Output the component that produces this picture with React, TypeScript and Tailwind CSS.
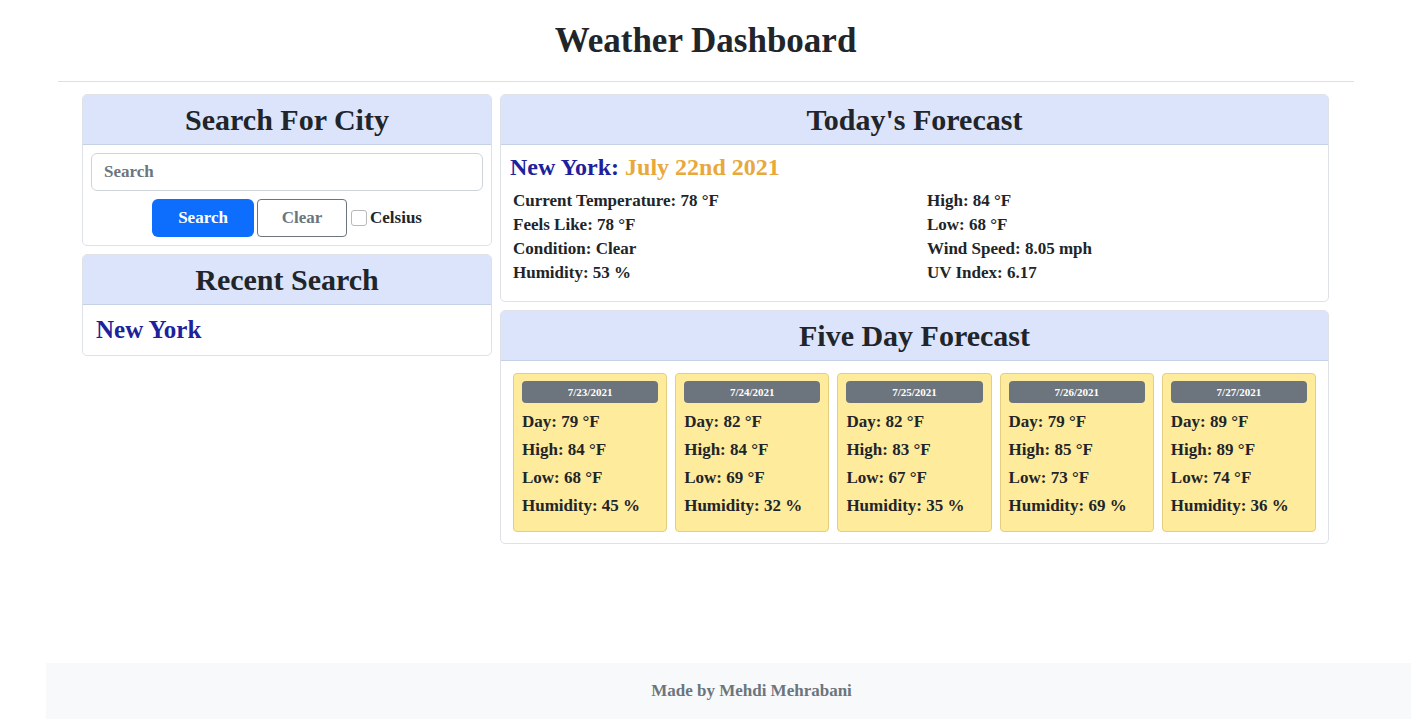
import React from 'react';

const today = {
  left: ['Current Temperature: 78 °F', 'Feels Like: 78 °F', 'Condition: Clear', 'Humidity: 53 %'],
  right: ['High: 84 °F', 'Low: 68 °F', 'Wind Speed: 8.05 mph', 'UV Index: 6.17'],
};

const forecast = [
  { date: '7/23/2021', day: 79, high: 84, low: 68, hum: 45 },
  { date: '7/24/2021', day: 82, high: 84, low: 69, hum: 32 },
  { date: '7/25/2021', day: 82, high: 83, low: 67, hum: 35 },
  { date: '7/26/2021', day: 79, high: 85, low: 73, hum: 69 },
  { date: '7/27/2021', day: 89, high: 89, low: 74, hum: 36 },
];

function Card({ title, children }: { title: string; children: React.ReactNode }) {
  return (
    <div className="border border-[#dee2e6] rounded-[5px] overflow-hidden bg-white">
      <div className="h-[50px] bg-[#dbe4fa] border-b border-[#c6d0e6] flex items-center justify-center">
        <h2 className="text-[30px] leading-none">{title}</h2>
      </div>
      {children}
    </div>
  );
}

export default function App() {
  return (
    <div className="min-h-screen flex flex-col bg-white text-[#212529] font-['Liberation_Serif',serif] font-bold">
      <header className="mx-auto w-[1296px] h-[82px] border-b border-[#dfdfdf] flex items-center justify-center">
        <h1 className="text-[35px] leading-none">Weather Dashboard</h1>
      </header>

      <main className="mx-auto w-[1247px] mt-3 grid grid-cols-[410px_1fr] gap-2 items-start">
        <div className="flex flex-col gap-2">
          <Card title="Search For City">
            <div className="p-2">
              <input
                placeholder="Search"
                className="w-full h-[38px] border border-[#ced4da] rounded-[6px] px-3 text-[17px] font-bold placeholder:text-[#6c757d] outline-none"
              />
              <div className="mt-2 flex items-center justify-center">
                <button className="w-[102px] h-[38px] bg-[#0d6efd] text-white rounded-[6px] text-[17px]">Search</button>
                <button className="ml-[3px] w-[90px] h-[38px] border border-[#6c757d] text-[#6c757d] rounded-[4px] text-[17px]">Clear</button>
                <label className="ml-1 flex items-center text-[17px]">
                  <span className="w-4 h-4 border border-[#b9b9b9] rounded-[3px] bg-white mr-[3px]" />
                  Celsius
                </label>
              </div>
            </div>
          </Card>
          <Card title="Recent Search">
            <div className="px-[13px] py-2 h-[50px] flex items-center">
              <span className="text-[25px] text-[#201f9c]">New York</span>
            </div>
          </Card>
        </div>

        <div className="flex flex-col gap-2">
          <Card title="Today's Forecast">
            <div className="pt-[6px] pb-4">
              <div className="px-[9px] h-8 leading-8 text-[24px]">
                <span className="text-[#201f9c]">New York: </span>
                <span className="text-[#e9a83a]">July 22nd 2021</span>
              </div>
              <div className="mt-[6px] pl-3 grid grid-cols-[414px_1fr] text-[17px]">
                <div>
                  {today.left.map((t) => (
                    <div key={t} className="h-6 leading-6">{t}</div>
                  ))}
                </div>
                <div>
                  {today.right.map((t) => (
                    <div key={t} className="h-6 leading-6">{t}</div>
                  ))}
                </div>
              </div>
            </div>
          </Card>

          <Card title="Five Day Forecast">
            <div className="px-3 pt-3 pb-[11px] grid grid-cols-5 gap-2">
              {forecast.map((f) => (
                <div key={f.date} className="bg-[#ffeb9c] border border-[#e3cf7f] rounded-[4px] px-2 pt-[7px] pb-[11px]">
                  <div className="h-[22px] bg-[#6c757d] rounded-[4px] text-white text-[11px] flex items-center justify-center mb-[5px]">
                    {f.date}
                  </div>
                  <div className="text-[17px]">
                    <div className="h-7 leading-7">Day: {f.day} °F</div>
                    <div className="h-7 leading-7">High: {f.high} °F</div>
                    <div className="h-7 leading-7">Low: {f.low} °F</div>
                    <div className="h-7 leading-7">Humidity: {f.hum} %</div>
                  </div>
                </div>
              ))}
            </div>
          </Card>
        </div>
      </main>

      <footer className="mt-auto ml-[46px] h-14 bg-[#f8f9fa] flex items-center justify-center pl-[46px] text-[#6c757d] text-[17px]">
        Made by Mehdi Mehrabani
      </footer>
    </div>
  );
}
